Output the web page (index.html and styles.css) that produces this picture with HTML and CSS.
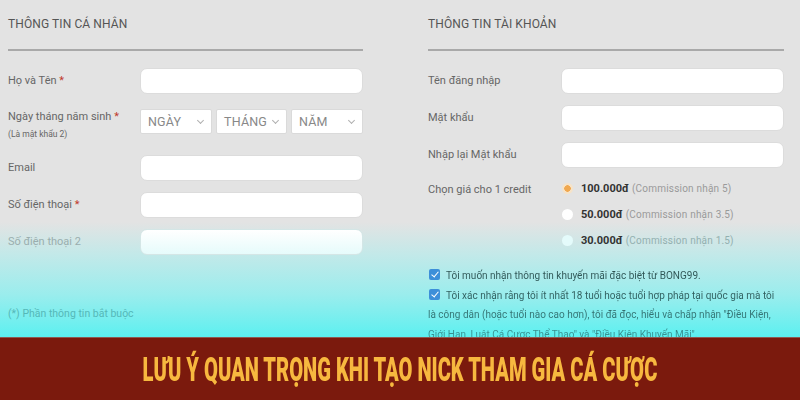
FILE: index.html
```html
<!DOCTYPE html>
<html lang="vi">
<head>
<meta charset="utf-8">
<link rel="stylesheet" href="styles.css">
</head>
<body>
<div class="page">
  <section class="col col-left">
    <h2 class="heading">THÔNG TIN CÁ NHÂN</h2>
    <div class="rule"></div>
    <div class="row r1">
      <label class="lbl">Họ và Tên <span class="req">*</span></label>
      <div class="input"></div>
    </div>
    <div class="row r2">
      <label class="lbl">Ngày tháng năm sinh <span class="req">*</span><small class="sub">(Là mật khẩu 2)</small></label>
      <div class="selects">
        <div class="select">NGÀY<span class="chev"></span></div>
        <div class="select">THÁNG<span class="chev"></span></div>
        <div class="select">NĂM<span class="chev"></span></div>
      </div>
    </div>
    <div class="row r3">
      <label class="lbl">Email</label>
      <div class="input"></div>
    </div>
    <div class="row r4">
      <label class="lbl">Số điện thoại <span class="req">*</span></label>
      <div class="input"></div>
    </div>
    <div class="row r5">
      <label class="lbl faded">Số điện thoại 2</label>
      <div class="input input-fade"></div>
    </div>
    <p class="note">(*) Phần thông tin bắt buộc</p>
  </section>

  <section class="col col-right">
    <h2 class="heading">THÔNG TIN TÀI KHOẢN</h2>
    <div class="rule"></div>
    <div class="row r1">
      <label class="lbl">Tên đăng nhập</label>
      <div class="input"></div>
    </div>
    <div class="row rr">
      <label class="lbl">Mật khẩu</label>
      <div class="input"></div>
    </div>
    <div class="row rr">
      <label class="lbl">Nhập lại Mật khẩu</label>
      <div class="input"></div>
    </div>
    <div class="row rcredit">
      <label class="lbl">Chọn giá cho 1 credit</label>
      <div class="radios">
        <div class="radio-row"><span class="radio on"></span><b>100.000đ</b><span class="comm">(Commission nhận 5)</span></div>
        <div class="radio-row"><span class="radio"></span><b>50.000đ</b><span class="comm">(Commission nhận 3.5)</span></div>
        <div class="radio-row"><span class="radio tint"></span><b>30.000đ</b><span class="comm tint-text">(Commission nhận 1.5)</span></div>
      </div>
    </div>
    <div class="checks">
      <p class="check-line"><span class="cb"></span>Tôi muốn nhận thông tin khuyến mãi đặc biệt từ BONG99.</p>
      <p class="check-line"><span class="cb"></span>Tôi xác nhận rằng tôi ít nhất 18 tuổi hoặc tuổi hợp pháp tại quốc gia mà tôi là công dân (hoặc tuổi nào cao hơn), tôi đã đọc, hiểu và chấp nhận "Điều Kiện, Giới Hạn, Luật Cá Cược Thể Thao" và "Điều Kiện Khuyến Mãi".</p>
    </div>
  </section>
</div>
<div class="banner"><span class="banner-text">LƯU Ý QUAN TRỌNG KHI TẠO NICK THAM GIA CÁ CƯỢC</span></div>
</body>
</html>
```

FILE: styles.css
```css
* { box-sizing: border-box; }
html, body { margin: 0; padding: 0; }
body {
  width: 800px;
  height: 400px;
  overflow: hidden;
  font-family: Roboto, "Liberation Sans", Arial, sans-serif;
  color: #666;
  background: #7b1a0d;
}
.page {
  height: 337px;
  overflow: hidden;
  background: linear-gradient(to bottom,
    #e3e3e3 0,
    #e3e3e3 222px,
    #c2e9e9 255px,
    #9aeded 295px,
    #5cf0f0 337px);
  display: grid;
  grid-template-columns: 355px 356px;
  column-gap: 65px;
  padding-left: 8px;
}
.heading {
  margin: 17px 0 0;
  font-size: 12px;
  line-height: 14px;
  font-weight: 400;
  color: #555;
  letter-spacing: 0.1px;
}
.rule {
  margin-top: 18px;
  height: 2px;
  background: #a9a9a9;
}
.row {
  display: grid;
  grid-template-columns: 132px 223px;
  align-items: center;
}
.col-right .row { grid-template-columns: 133px 223px; }
.lbl {
  font-size: 11px;
  line-height: 14px;
  color: #666;
}
.lbl.faded { color: #9aaeae; }
.req { color: #c0392b; }
.sub {
  display: block;
  font-size: 8.5px;
  line-height: 12px;
  margin-top: 4px;
  color: #666;
}
.input {
  height: 26px;
  background: #fff;
  border-radius: 7px;
  border: 1px solid #dcdcdc;
}
.input-fade {
  background: linear-gradient(to bottom, #ffffff, #e6fbfb);
  border-color: #d4e6e6;
}
.r1 { margin-top: 17px; }
.r2 { margin-top: 15px; align-items: start; }
.r2 .lbl { margin-top: 1px; }
.r3 { margin-top: 15px; }
.r4 { margin-top: 11px; }
.r5 { margin-top: 11px; }
.rr { margin-top: 11px; }
.selects {
  display: grid;
  grid-template-columns: 72px 71px 72px;
  column-gap: 4px;
}
.select {
  position: relative;
  height: 25px;
  background: #fff;
  border: 1px solid #dadada;
  border-radius: 2px;
  font-size: 12.5px;
  line-height: 23px;
  padding-left: 7px;
  color: #888;
  letter-spacing: 0.2px;
}
.chev {
  position: absolute;
  right: 8px;
  top: 8px;
  width: 5px;
  height: 5px;
  border-right: 1px solid #b0b0b0;
  border-bottom: 1px solid #b0b0b0;
  transform: rotate(45deg);
}
.note {
  margin: 52px 0 0;
  font-size: 10.5px;
  color: #55b8b8;
}
.rcredit {
  margin-top: 15px;
  align-items: start;
}
.radios { display: flex; flex-direction: column; row-gap: 10px; margin-top: -3px; }
.radio-row {
  display: flex;
  align-items: center;
  height: 16px;
  font-size: 10.5px;
  color: #333;
}
.radio-row b { font-weight: 700; color: #333; font-size: 11px; }
.radio {
  width: 11px;
  height: 11px;
  border-radius: 50%;
  background: #fff;
  margin-left: 1px;
  margin-right: 8px;
}
.radio.tint { background: #e4fbfb; }
.radio.on {
  background: radial-gradient(circle, #f0a850 0 3px, #f6e3c8 3.5px 5.5px);
}
.comm { margin-left: 3px; color: #9a9a9a; font-size: 10px; letter-spacing: 0.2px; }
.comm.tint-text { color: #93b0b0; }
.checks {
  margin-top: 18px;
  font-size: 10px;
  line-height: 19.5px;
  color: #2f6262;
  background: linear-gradient(to bottom, #2d4f4f 0, #2f5f5f 40%, #347a7a 70%, #3aa2a2 100%);
  -webkit-background-clip: text;
  background-clip: text;
  -webkit-text-fill-color: transparent;
}
.check-line { margin: 0; }
.cb {
  display: inline-block;
  width: 11px;
  height: 11px;
  margin: 0 6px 0 1px;
  vertical-align: -1px;
  border-radius: 2px;
  background: #3d8fd9;
  position: relative;
}
.cb::after {
  content: "";
  position: absolute;
  left: 3.5px;
  top: 1px;
  width: 3px;
  height: 6px;
  border-right: 1.6px solid #fff;
  border-bottom: 1.6px solid #fff;
  transform: rotate(40deg);
}
.banner {
  height: 63px;
  background: #7b1a0d;
  border-top: 1px solid #8c5a52;
  display: flex;
  align-items: center;
  justify-content: center;
}
.banner-text {
  display: inline-block;
  font-family: Roboto, "Liberation Sans", sans-serif;
  font-weight: 900;
  font-size: 33px;
  line-height: 36px;
  color: #f7b83f;
  transform: scaleX(0.61);
  white-space: nowrap;
  margin-top: 1px;
}
```
